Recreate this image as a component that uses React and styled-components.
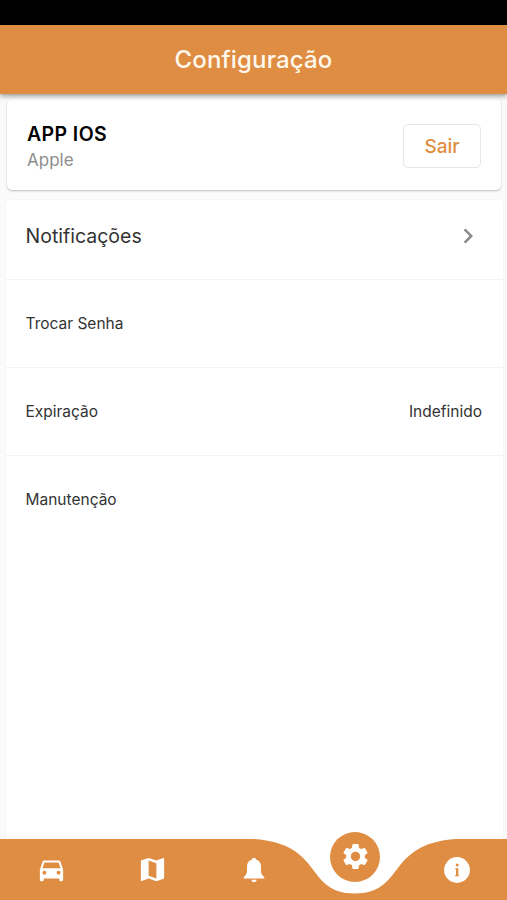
/* eslint-disable react/prop-types */
import React from 'react';

import styled, { createGlobalStyle } from 'styled-components';
import {
  MdChevronRight,
  MdDirectionsCar,
  MdMap,
  MdSettings,
} from 'react-icons/md';

const GlobalStyle = createGlobalStyle`
  * {
    box-sizing: border-box;
  }

  body {
    margin: 0;
    background: #fafafa;
    font-family: Inter, Roboto, sans-serif;
  }
`;

const Screen = styled.div`
  display: flex;
  flex-direction: column;
  height: 100vh;
  overflow: hidden;
`;

const StatusBar = styled.div`
  flex: none;
  height: 25px;
  background: #000;
`;

const Header = styled.header`
  position: relative;
  z-index: 1;
  flex: none;
  display: flex;
  align-items: center;
  justify-content: center;
  height: 69px;
  background: #df8d42;
  box-shadow: 0 2px 5px rgba(0, 0, 0, 0.4);
`;

const Title = styled.h1`
  margin: 0;
  color: #fff8ec;
  font-size: 24px;
  font-weight: 500;
  letter-spacing: 0.15px;
`;

const UserCard = styled.section`
  flex: none;
  display: flex;
  align-items: center;
  justify-content: space-between;
  height: 91px;
  margin: 5px 6px 0 7px;
  padding: 3px 20px 0;
  border-radius: 5px;
  background: #fff;
  box-shadow: 0 1px 2px rgba(0, 0, 0, 0.25);
`;

const UserInfo = styled.div`
  padding-top: 2px;
`;

const UserName = styled.p`
  margin: 0;
  color: #000;
  font-size: 19.5px;
  font-weight: 600;
  line-height: 25px;
  letter-spacing: 0.4px;
`;

const Company = styled.p`
  margin: 0;
  color: #8d8d8d;
  font-size: 17px;
  line-height: 26px;
`;

const LogoutButton = styled.button`
  width: 78px;
  height: 44px;
  padding: 0;
  border: 1.5px solid #e6e6e6;
  border-radius: 5px;
  background: #fff;
  color: #df8d42;
  font-family: inherit;
  font-size: 19px;
  font-weight: 500;
  letter-spacing: -0.1px;
`;

const Options = styled.main`
  flex: 1;
  margin: 10px 4px 0 6px;
  border-radius: 4px 4px 0 0;
  background: #fff;
  box-shadow: 0 0 2px rgba(0, 0, 0, 0.07);
`;

const Option = styled.div`
  display: flex;
  align-items: center;
  justify-content: space-between;
  height: ${({ $large }) => ($large ? '80px' : '88px')};
  padding: 0 21px 0 19.5px;
  padding-bottom: ${({ $large }) => ($large ? '8px' : '1px')};
  border-bottom: 1px solid #f3f3f3;
  color: #333;
  font-size: ${({ $large }) => ($large ? '19.5px' : '15.5px')};

  &:last-child {
    padding-bottom: 2px;
    border-bottom: none;
  }
`;

const Chevron = styled(MdChevronRight)`
  margin-right: -1px;
  color: #8a8a8a;
  font-size: 30px;
`;

const NavBar = styled.nav`
  position: relative;
  z-index: 1;
  flex: none;
  display: grid;
  grid-template-columns: repeat(5, 1fr);
  height: 61px;
  background: #fff;
`;

const NavShape = styled.svg`
  position: absolute;
  inset: 0;
  width: 100%;
  height: 100%;
`;

const NavItem = styled.div`
  position: relative;
  display: flex;
  align-items: center;
  justify-content: center;
  padding-left: 1px;
  color: #fff;
  font-size: 31px;
`;

const ActiveBubble = styled.div`
  position: relative;
  top: -13px;
  display: flex;
  align-items: center;
  justify-content: center;
  width: 50px;
  height: 50px;
  border-radius: 50%;
  background: #df8d42;
`;

const BellIcon = () => (
  <svg width="24" height="26" viewBox="0 0 24 26" fill="currentColor">
    <path d="M12 .7C10.8 .7 10.1 1.4 10 2.6C6.8 3.5 5 6.1 5 9.4V14.3C5 16.6 4 18.2 1.7 20.2V21.6H22.3V20.2C20 18.2 19 16.6 19 14.3V9.4C19 6.1 17.2 3.5 14 2.6C13.9 1.4 13.2 .7 12 .7Z" />
    <path d="M9.3 22.8H14.7C14.5 24.3 13.4 25.2 12 25.2S9.5 24.3 9.3 22.8Z" />
  </svg>
);

const InfoIcon = () => (
  <svg width="26" height="26" viewBox="0 0 26 26">
    <circle cx="13" cy="13" r="12.9" fill="currentColor" />
    <circle cx="13.2" cy="8" r="1.5" fill="#df8d42" />
    <path
      d="M11.3 11.3H14.3V18.1H15.1V19.3H11.2V18.1H12V12.4H11.3Z"
      fill="#df8d42"
    />
  </svg>
);

const options = [
  { label: 'Notificações', large: true },
  { label: 'Trocar Senha' },
  { label: 'Expiração', value: 'Indefinido' },
  { label: 'Manutenção' },
];

const tabs = [
  { id: 'cars', Icon: MdDirectionsCar },
  { id: 'map', Icon: MdMap },
  { id: 'alerts', Icon: BellIcon },
  { id: 'settings', Icon: MdSettings },
  { id: 'info', Icon: InfoIcon },
];

function BottomNav({ active }) {
  return (
    <NavBar>
      <NavShape viewBox="0 0 507 61" preserveAspectRatio="none">
        <path
          d="M0 0H253.5C324.5 4.5 304.2 54.5 354.9 54.5C405.6 54.5 385.3 4.5 456.3 0H507V61H0Z"
          fill="#df8d42"
        />
      </NavShape>
      {tabs.map(({ id, Icon }) => (
        <NavItem key={id}>
          {id === active ? (
            <ActiveBubble>
              <Icon />
            </ActiveBubble>
          ) : (
            <Icon />
          )}
        </NavItem>
      ))}
    </NavBar>
  );
}

function App() {
  return (
    <Screen>
      <GlobalStyle />
      <StatusBar />
      <Header>
        <Title>Configuração</Title>
      </Header>
      <UserCard>
        <UserInfo>
          <UserName>APP IOS</UserName>
          <Company>Apple</Company>
        </UserInfo>
        <LogoutButton>Sair</LogoutButton>
      </UserCard>
      <Options>
        {options.map(({ label, value, large }) => (
          <Option key={label} $large={large}>
            <span>{label}</span>
            {value && <span>{value}</span>}
            {large && <Chevron />}
          </Option>
        ))}
      </Options>
      <BottomNav active="settings" />
    </Screen>
  );
}

export default App;
